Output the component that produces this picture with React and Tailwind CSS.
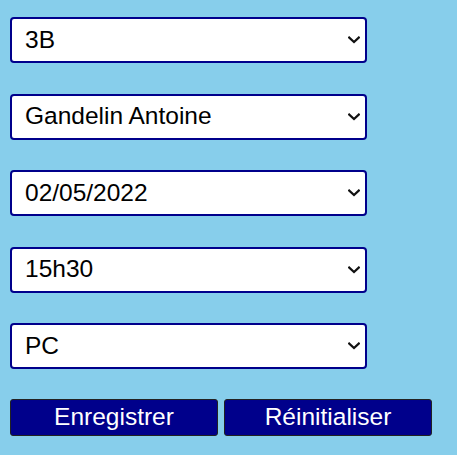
import React from "react";

const options = ["3B", "Gandelin Antoine", "02/05/2022", "15h30", "PC"];

function Chevron() {
  return (
    <svg
      className="pointer-events-none absolute right-[7px] top-1/2 -translate-y-1/2"
      width="12"
      height="8"
      viewBox="0 0 12 8"
      fill="none"
    >
      <path d="M1.2 1.5 L6 6 L10.8 1.5" stroke="#111" strokeWidth="2.2" strokeLinecap="square" />
    </svg>
  );
}

export default function App() {
  return (
    <div
      className="min-h-[455px] w-full bg-[#87ceeb] pl-[10px] pt-[17px]"
      style={{ fontFamily: '"Liberation Sans", Arial, sans-serif' }}
    >
      <form className="flex flex-col gap-[30.5px]">
        {options.map((v) => (
          <div key={v} className="relative w-[357px]">
            <select
              defaultValue={v}
              className="block h-[46px] w-[357px] appearance-none rounded-[4px] border-2 border-[#00008b] bg-white pl-[13px] text-[24.5px] text-black outline-none"
            >
              <option value={v}>{v}</option>
            </select>
            <Chevron />
          </div>
        ))}
        <div className="-mt-[0.5px] flex gap-[6px]">
          <button
            type="button"
            className="h-[37px] w-[208px] rounded-[3px] border border-[#222] bg-[#00008b] text-[24.5px] leading-none text-white"
          >
            Enregistrer
          </button>
          <button
            type="button"
            className="h-[37px] w-[208px] rounded-[3px] border border-[#222] bg-[#00008b] text-[24.5px] leading-none text-white"
          >
            Réinitialiser
          </button>
        </div>
      </form>
    </div>
  );
}
